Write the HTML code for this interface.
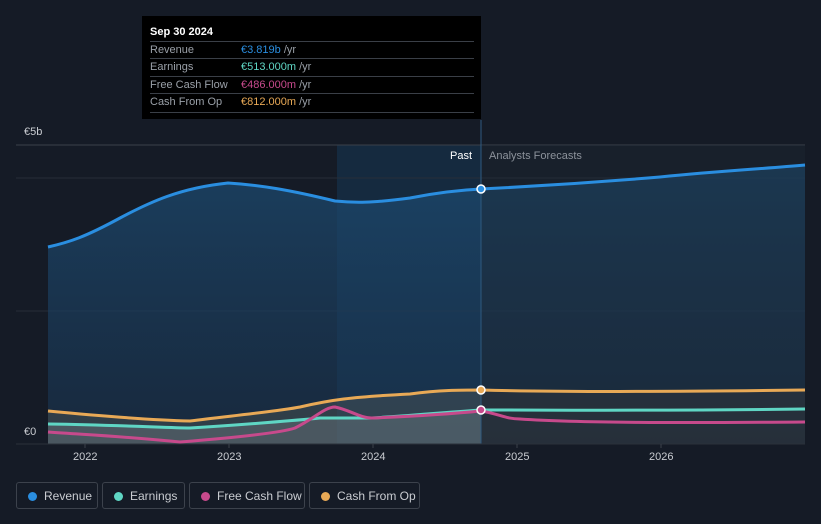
<!DOCTYPE html>
<html><head><meta charset="utf-8"><style>
body{margin:0;width:821px;height:524px;background:#151b26;font-family:"Liberation Sans",sans-serif;overflow:hidden;position:relative}
.tt{position:absolute;left:142px;top:16px;width:339px;height:103px;background:#000;}
.tt .h{position:absolute;left:8px;top:10px;color:#fff;font-size:11px;font-weight:bold}
.row{position:absolute;left:8px;width:324px;border-top:1px solid #3a3f47;height:17px;font-size:11px;color:#9aa0a8;line-height:17px}
.row span.v{position:absolute;left:91px}
.leg{position:absolute;top:482px;height:27px;border:1px solid #3c424c;border-radius:3px;color:#c9ccd1;font-size:12px;line-height:27px;box-sizing:border-box}
.leg i{position:absolute;left:11px;top:9px;width:9px;height:9px;border-radius:50%}
.leg b{font-weight:normal;position:absolute;left:27px}
.ax{position:absolute;top:451px;color:#c9ccd1;font-size:11px}
</style></head><body>
<svg width="821" height="524" style="position:absolute;left:0;top:0">
<defs>
<linearGradient id="rg" x1="0" y1="0" x2="0" y2="1"><stop offset="0" stop-color="#1c4a70" stop-opacity="0.95"/><stop offset="1" stop-color="#1a3450" stop-opacity="0.7"/></linearGradient>
</defs>
<rect x="337" y="145" width="144" height="299" fill="#16314a" opacity="0.7"/>
<line x1="16" y1="145" x2="805" y2="145" stroke="#3a404a"/>
<line x1="16" y1="178" x2="805" y2="178" stroke="#262d38"/>
<line x1="16" y1="311" x2="805" y2="311" stroke="#262d38"/>
<path d="M48,247 C70,242 85,237 120,218 C150,202 180,188 228,183 C260,185 290,190 335,201 C355,203 372,203 410,198 C440,192 460,190 481,189 C540,186 600,182 660,177 C720,171 760,169 805,165 L805,444 L48,444Z" fill="url(#rg)" opacity="0.8"/>
<rect x="481" y="145" width="324" height="299" fill="#202a36" opacity="0.35"/>
<path d="M48,411 C90,415 150,420 190,421 C230,416 280,411 300,407 C330,400 350,397 410,394 C440,390 460,390 481,390 L481,444 L48,444Z" fill="#6b6a5e" opacity="0.3"/>
<path d="M48,424 C120,425 170,428 190,428 C240,425 300,420 320,418 L372,418 C420,415 450,412 481,410 L481,444 L48,444Z" fill="#7a8a90" opacity="0.35"/>
<path d="M481,390 C560,392 660,392 805,390 L805,444 L481,444Z" fill="#3a3a3a" opacity="0.4"/>
<line x1="481" y1="120" x2="481" y2="444" stroke="#2e5a80" stroke-width="1"/>
<line x1="16" y1="444" x2="805" y2="444" stroke="#2a303a"/>
<path d="M48,247 C70,242 85,237 120,218 C150,202 180,188 228,183 C260,185 290,190 335,201 C355,203 372,203 410,198 C440,192 460,190 481,189 C540,186 600,182 660,177 C720,171 760,169 805,165" fill="none" stroke="#2a8ee0" stroke-width="3"/>
<path d="M48,411 C90,415 150,420 190,421 C230,416 280,411 300,407 C330,400 350,397 410,394 C440,390 460,390 481,390 C560,392 660,392 805,390" fill="none" stroke="#e8a956" stroke-width="3"/>
<path d="M48,424 C120,425 170,428 190,428 C240,425 300,420 320,418 L372,418 C420,415 450,412 481,410 C560,410 660,411 805,409" fill="none" stroke="#5fd6c4" stroke-width="3"/>
<path d="M48,432 C90,435 120,436 180,442 C230,438 280,433 295,428 C315,418 325,407 335,407 C350,410 360,418 372,418 C420,416 450,414 481,411 C500,414 505,419 520,419 C580,423 680,423 805,422" fill="none" stroke="#c74a8c" stroke-width="3"/>
<circle cx="481" cy="189" r="4" fill="#2a8ee0" stroke="#fff" stroke-width="1.5"/>
<circle cx="481" cy="390" r="4" fill="#e8a956" stroke="#fff" stroke-width="1.5"/>
<circle cx="481" cy="410" r="4" fill="#c74a8c" stroke="#fff" stroke-width="1.5"/>
<g stroke="#3a404a"><line x1="85" y1="444" x2="85" y2="448"/><line x1="229" y1="444" x2="229" y2="448"/><line x1="373" y1="444" x2="373" y2="448"/><line x1="517" y1="444" x2="517" y2="448"/><line x1="661" y1="444" x2="661" y2="448"/></g>
</svg>
<div style="position:absolute;left:24px;top:126px;color:#c9ccd1;font-size:11px">€5b</div>
<div style="position:absolute;left:24px;top:426px;color:#c9ccd1;font-size:11px">€0</div>
<div style="position:absolute;left:450px;top:150px;color:#fff;font-size:11px">Past</div>
<div style="position:absolute;left:489px;top:150px;color:#8c929b;font-size:11px">Analysts Forecasts</div>
<div class="ax" style="left:73px">2022</div><div class="ax" style="left:217px">2023</div><div class="ax" style="left:361px">2024</div><div class="ax" style="left:505px">2025</div><div class="ax" style="left:649px">2026</div>
<div class="tt"><div class="h">Sep 30 2024</div>
<div class="row" style="top:25px">Revenue<span class="v"><span style="color:#2a8ee0">€3.819b</span> /yr</span></div>
<div class="row" style="top:42px">Earnings<span class="v"><span style="color:#5fd6c4">€513.000m</span> /yr</span></div>
<div class="row" style="top:60px">Free Cash Flow<span class="v"><span style="color:#c74a8c">€486.000m</span> /yr</span></div>
<div class="row" style="top:77px;height:18px;border-bottom:1px solid #3a3f47">Cash From Op<span class="v"><span style="color:#e8a956">€812.000m</span> /yr</span></div>
</div>
<div class="leg" style="left:16px;width:82px"><i style="background:#2a8ee0"></i><b>Revenue</b></div>
<div class="leg" style="left:102px;width:83px"><i style="background:#5fd6c4"></i><b>Earnings</b></div>
<div class="leg" style="left:189px;width:116px"><i style="background:#c74a8c"></i><b>Free Cash Flow</b></div>
<div class="leg" style="left:309px;width:111px"><i style="background:#e8a956"></i><b>Cash From Op</b></div>
</body></html>
